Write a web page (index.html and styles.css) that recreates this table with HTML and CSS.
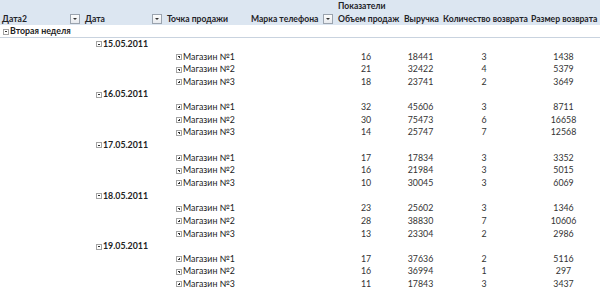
FILE: index.html
```html
<!DOCTYPE html>
<html lang="ru">
<head>
<meta charset="utf-8">
<title>Pivot</title>
<link rel="stylesheet" href="styles.css">
</head>
<body>
<div class="pivot">
  <div class="row head top">
    <div class="c c1"></div><div class="c c2"></div><div class="c c3"></div><div class="c c4"></div>
    <div class="c c5 span">Показатели</div>
  </div>
  <div class="row head">
    <div class="c c1 hc"><span>Дата2</span><i class="dd"></i></div>
    <div class="c c2 hc"><span>Дата</span><i class="dd"></i></div>
    <div class="c c3 hc"><span>Точка продажи</span></div>
    <div class="c c4 hc"><span>Марка телефона</span><i class="dd"></i></div>
    <div class="c c5 hc"><span>Объем продаж</span></div>
    <div class="c c6 hc"><span>Выручка</span></div>
    <div class="c c7 hc"><span>Количество возврата</span></div>
    <div class="c c8 hc"><span>Размер возврата</span></div>
  </div>
  <div class="row week">
    <div class="c wk"><i class="tg minus"></i>Вторая неделя</div>
  </div>
  <div id="body"></div>
</div>
<script src="app.js"></script>
</body>
</html>
```
FILE: app.js
```js
const data = [
  ["15.05.2011", [[16,18441,3,1438],[21,32422,4,5379],[18,23741,2,3649]]],
  ["16.05.2011", [[32,45606,3,8711],[30,75473,6,16658],[14,25747,7,12568]]],
  ["17.05.2011", [[17,17834,3,3352],[16,21984,3,5015],[10,30045,3,6069]]],
  ["18.05.2011", [[23,25602,3,1346],[28,38830,7,10606],[13,23304,2,2986]]],
  ["19.05.2011", [[17,37636,2,5116],[16,36994,1,297],[11,17843,3,3437]]]
];
const body = document.getElementById('body');
let html = '';
for (const [d, stores] of data) {
  html += '<div class="row"><div class="c c1"></div><div class="c date"><i class="tg minus"></i>' + d + '</div></div>';
  stores.forEach((v, i) => {
    html += '<div class="row"><div class="c c1"></div><div class="c c2"></div>' +
      '<div class="c c3 store"><i class="tg plus"></i>Магазин №' + (i + 1) + '</div><div class="c c4"></div>' +
      '<div class="c c5 num">' + v[0] + '</div><div class="c c6 num">' + v[1] + '</div>' +
      '<div class="c c7 num">' + v[2] + '</div><div class="c c8 num">' + v[3] + '</div></div>';
  });
}
body.innerHTML = html;
```
FILE: styles.css
```css
html, body { margin: 0; padding: 0; background: #fff; }
body { width: 600px; height: 291px; overflow: hidden; font-family: Lato, "Liberation Sans", sans-serif; font-size: 8.8px; color: #222; }
.pivot { display: flex; flex-direction: column; }
.row { display: grid; grid-template-columns: 83px 82px 84px 87px 66px 39px 88px 71px; height: 12.65px; line-height: 12.65px; box-sizing: border-box; white-space: nowrap; }
.head { background: #dce6f1; font-weight: bold; color: #1f2328; font-size: 8.6px; }
.c { position: relative; overflow: visible; }
.span { grid-column: 5 / 9; padding-left: 2px; }
.hc { display: flex; align-items: center; padding-left: 2px; padding-right: 3px; }
.dd { margin-left: auto; width: 8px; height: 8px; border: 1px solid #9aa3ae; background: linear-gradient(#fdfdfd, #e6e9ee); position: relative; flex: none; }
.dd::after { content: ""; position: absolute; left: 2px; top: 3px; border-left: 2px solid transparent; border-right: 2px solid transparent; border-top: 2px solid #333; }
.week { border-bottom: 1px solid #c9d3df; }
.wk { grid-column: 1 / 9; padding-left: 3px; font-weight: bold; display: flex; align-items: center; }
.date { grid-column: 2 / 9; padding-left: 13px; font-weight: bold; display: flex; align-items: center; }
.store { display: flex; align-items: center; padding-left: 11px; }
.tg { width: 4px; height: 4px; border: 1px solid #a3a3a3; background: #fff; position: relative; margin-right: 1px; flex: none; }
.tg::before { content: ""; position: absolute; left: 1px; top: 1.5px; width: 2px; height: 1px; background: #333; }
.plus::after { content: ""; position: absolute; left: 1.5px; top: 1px; width: 1px; height: 2px; background: #333; }
.num { text-align: center; padding-right: 2px; color: #333; }
.c5.num { padding-right: 6px; }
```
